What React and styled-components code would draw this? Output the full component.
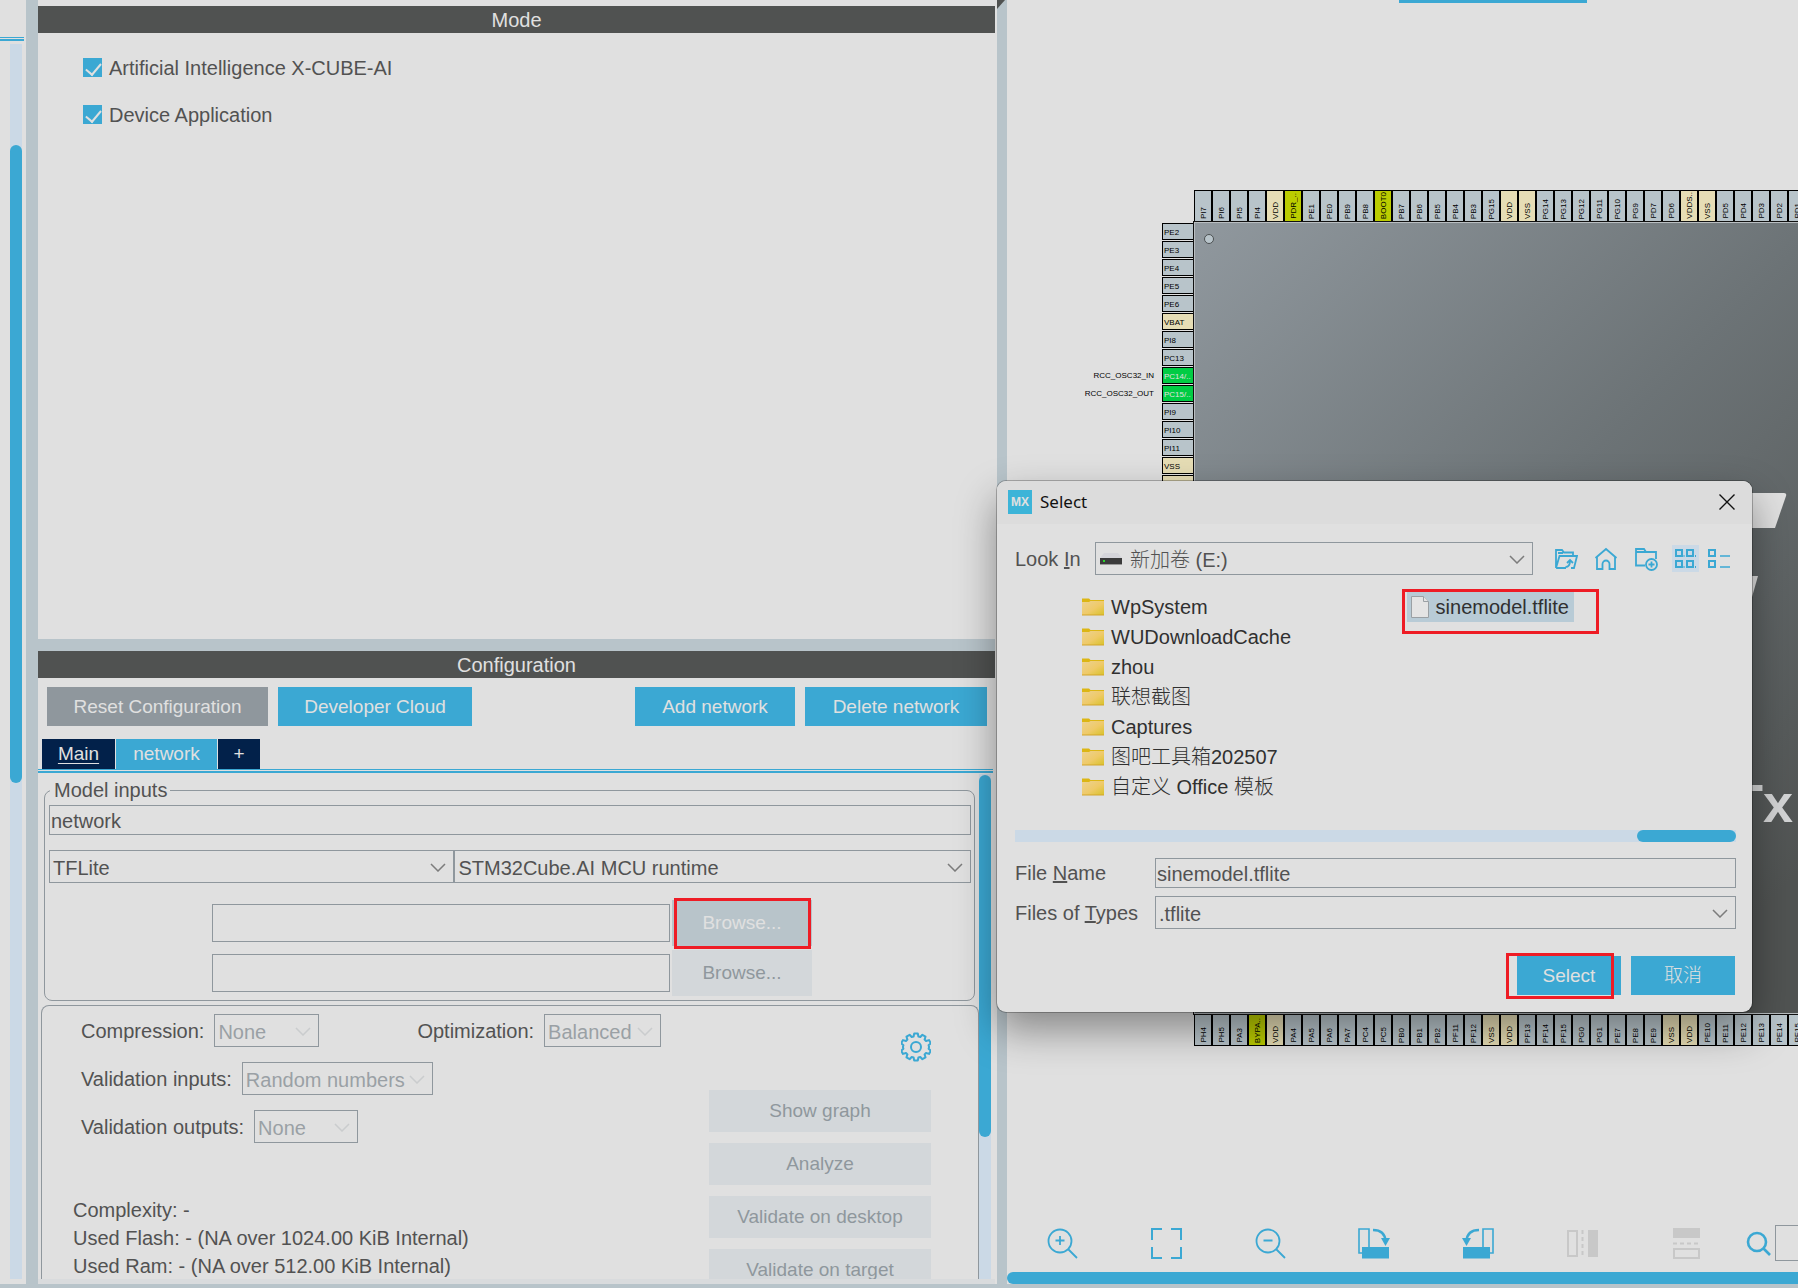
import React, { useState } from 'react';
import styled, { createGlobalStyle, css } from 'styled-components';

const colors = {
  face: '#e0e0e0',
  edge: '#d9dbdd',
  divider: '#b8c4ca',
  header: '#505251',
  blue: '#3ba8d3',
  navy: '#02214a',
  track: '#cbd9e6',
  line: '#8f979d',
  text: '#525252',
  red: '#ee1c25',
  power: '#e6ddb5',
  boot: '#bbcc00',
  active: '#00cc44'
};

const TOP_PINS =
  'PI7 PI6 PI5 PI4 VDD PDR_.. PE1 PE0 PB9 PB8 BOOT0 PB7 PB6 PB5 PB4 PB3 PG15 VDD VSS PG14 PG13 PG12 PG11 PG10 PG9 PD7 PD6 VDDS.. VSS PD5 PD4 PD3 PD2 PD1'.split(
    ' '
  );

const BOTTOM_PINS =
  'PH4 PH5 PA3 BYPA.. VDD PA4 PA5 PA6 PA7 PC4 PC5 PB0 PB1 PB2 PF11 PF12 VSS VDD PF13 PF14 PF15 PG0 PG1 PE7 PE8 PE9 VSS VDD PE10 PE11 PE12 PE13 PE14 PE15'.split(
    ' '
  );

const LEFT_PINS = [
  { name: 'PE2' },
  { name: 'PE3' },
  { name: 'PE4' },
  { name: 'PE5' },
  { name: 'PE6' },
  { name: 'VBAT' },
  { name: 'PI8' },
  { name: 'PC13' },
  { name: 'PC14/..', signal: 'RCC_OSC32_IN' },
  { name: 'PC15/..', signal: 'RCC_OSC32_OUT' },
  { name: 'PI9' },
  { name: 'PI10' },
  { name: 'PI11' },
  { name: 'VSS' },
  { name: 'VDD' }
];

const FOLDERS = [
  'WpSystem',
  'WUDownloadCache',
  'zhou',
  '联想截图',
  'Captures',
  '图吧工具箱202507',
  '自定义 Office 模板'
];

const pinColor = (name, signal) => {
  if (signal) return colors.active;
  if (/^V/.test(name)) return colors.power;
  if (/^(PDR|BOOT|BYPA)/.test(name)) return colors.boot;
  return colors.divider;
};

/* icons */

const Chevron = () => (
  <svg width="16" height="9" viewBox="0 0 16 9" fill="none" stroke="currentColor" strokeWidth="1.5">
    <path d="M1 1 L8 8 L15 1" />
  </svg>
);

const GearIcon = () => (
  <svg width="30" height="30" viewBox="0 0 30 30" fill="none" stroke={colors.blue} strokeWidth="2">
    <path
      strokeLinejoin="round"
      d="M13.2 1.500h3.600l.6 3 1.900.5 2.100-2.200 3.100 1.800-.9 3 1.400 1.400 3-.9 1.800 3.100-2.200 2.100.5 1.700-.5 1.700 2.200 2.100-1.800 3.100-3-.9-1.400 1.400.9 3-3.100 1.800-2.100-2.200-1.900.5-.6 3h-3.600l-.6-3-1.900-.5-2.100 2.200-3.100-1.800.9-3-1.400-1.400-3 .9-1.800-3.100 2.200-2.100-.5-1.700.5-1.700-2.200-2.100 1.800-3.100 3 .9 1.400-1.400-.9-3 3.100-1.800 2.100 2.200 1.900-.5z"
    />
    <circle cx="15" cy="15" r="5" />
  </svg>
);

const FolderIcon = () => (
  <svg width="22" height="18" viewBox="0 0 22 18">
    <defs>
      <linearGradient id="folder" x1="0" y1="0" x2="1" y2="1">
        <stop offset="0" stopColor="#ecd292" />
        <stop offset="0.55" stopColor="#efca68" />
        <stop offset="1" stopColor="#d8c22a" />
      </linearGradient>
    </defs>
    <path d="M0 0.5h7l1.5 1.5h13.500v4H0z" fill="#dcb614" />
    <path d="M0 4h7l1.500-1h13.500v14H0z" fill="url(#folder)" />
    <path d="M0 17h22" stroke="#d3a52c" />
  </svg>
);

const FileIcon = () => (
  <svg width="18" height="22" viewBox="0 0 18 22" fill="#e4e4e4" stroke="#9aa0a4">
    <path d="M.5.500h12l5 5v16H.5z" />
    <path d="M12.500.500v5h5" />
  </svg>
);

const DriveIcon = () => (
  <svg width="22" height="13" viewBox="0 0 22 13">
    <path d="M4 0h14l4 5H0z" fill="#d5d5da" />
    <path d="M0 5h22v7H0z" fill="#3b3b3b" />
    <path d="M0 11.500h22" stroke="#999" />
    <path d="M3 7h2v2H3z" fill="#2bd52b" />
  </svg>
);

const CloseIcon = () => (
  <svg width="16" height="16" viewBox="0 0 16 16" stroke="#111" strokeWidth="1.4">
    <path d="M.5.500l15 15M15.500.500l-15 15" />
  </svg>
);

const FolderUpIcon = () => (
  <svg width="24" height="22" viewBox="0 0 24 22" fill="none" stroke={colors.blue} strokeWidth="1.8">
    <path d="M2 20V2h6l2 2.500h9V8M2 20L5.500 8H23l-3 12h-3M2 20h10M4 5h5" />
    <path d="M11.500 19c3 0 4.500-2 4.500-6M13 15l3-3 3 3" />
  </svg>
);

const HomeIcon = () => (
  <svg width="24" height="24" viewBox="0 0 24 24" fill="none" stroke={colors.blue} strokeWidth="1.8">
    <path d="M1.500 11L12 2l10.500 9M3 10v12h5.500v-5a3.500 3.500 0 0 1 7 0v5H21V10" />
  </svg>
);

const NewFolderIcon = () => (
  <svg width="24" height="24" viewBox="0 0 24 24" fill="none" stroke={colors.blue} strokeWidth="1.8">
    <path d="M11 18.500H2V2h8l2 3h10v7M2 5h10" />
    <circle cx="17.500" cy="17.500" r="5.500" />
    <path d="M17.500 14.500v6M14.500 17.500h6" />
  </svg>
);

const GridIcon = () => (
  <svg width="23" height="21" viewBox="0 0 23 21" fill="none" stroke={colors.blue} strokeWidth="2">
    <path d="M2 2h6v6H2zM13 2h6v6h-6zM2 13h6v6H2zM13 13h6v6h-6z" />
    <path d="M10 7v2M21.500 7v2M10 18v2M21.500 18v2" strokeWidth="1" />
  </svg>
);

const ListIcon = () => (
  <svg width="23" height="21" viewBox="0 0 23 21" fill="none" stroke={colors.blue} strokeWidth="2">
    <path d="M2 2h6v6H2zM2 13h6v6H2z" />
    <path d="M13 8h10M13 19h10" strokeWidth="1.600" />
  </svg>
);

const ZoomIcon = ({ plus }) => (
  <svg width="31" height="31" viewBox="0 0 31 31" fill="none" stroke={colors.blue} strokeWidth="1.800">
    <circle cx="13" cy="13" r="11.500" />
    <path d="M21 21l9 9M8.500 12.500h9" />
    {plus && <path d="M13 8v9" />}
  </svg>
);

const FitIcon = () => (
  <svg width="31" height="31" viewBox="0 0 31 31" fill="none" stroke={colors.blue} strokeWidth="2">
    <path d="M1 12V1h10M20 1h10v11M30 19v11H20M11 30H1V19" />
  </svg>
);

const RotateIcon = ({ left }) => (
  <svg width="32" height="31" viewBox="0 0 32 31" fill="none" stroke={colors.blue} strokeWidth="1.600">
    <g transform={left ? 'matrix(-1 0 0 1 32 0)' : undefined}>
      <path d="M4 25H1V1h10v18" />
      <path d="M4 19h27v11.500H4z" fill={colors.blue} stroke="none" />
      <path d="M15 2c8 0 12 4 12.500 11" strokeWidth="2.400" />
      <path d="M23 10h9l-4.500 8z" fill={colors.blue} stroke="none" />
    </g>
  </svg>
);

const FlipIcon = ({ vertical }) => (
  <svg width="31" height="31" viewBox="0 0 31 31" fill="none" stroke="#c8c8c8" strokeWidth="2">
    <g transform={vertical ? 'matrix(0 -1 1 0 0 31)' : undefined}>
      <path d="M1 3h9v25H1z" />
      <path d="M15.500 2v28" strokeDasharray="4 3" />
      <path d="M21 2h10v27H21z" fill="#c8c8c8" stroke="none" />
    </g>
  </svg>
);

const SearchIcon = () => (
  <svg width="25" height="25" viewBox="0 0 25 25" fill="none" stroke={colors.blue} strokeWidth="2.600">
    <circle cx="11" cy="11" r="9" />
    <path d="M17.500 17.500l6.500 6.500" />
  </svg>
);

/* shared controls */

function Dropdown({ id, value, label, width, icon, disabled }) {
  return (
    <SelectBox $width={width} $disabled={disabled}>
      {icon && <SelectIcon>{icon}</SelectIcon>}
      <Select id={id} aria-label={label} disabled={disabled} $hasIcon={!!icon}>
        <option>{value}</option>
      </Select>
      <SelectArrow>
        <Chevron />
      </SelectArrow>
    </SelectBox>
  );
}

function Option({ id, label, value, width }) {
  return (
    <Field>
      <label htmlFor={id}>{label}</label>
      <Dropdown id={id} value={value} width={width} disabled />
    </Field>
  );
}

function PinRow({ names }) {
  return (
    <Pins>
      {names.map((name, index) => (
        <VerticalPin key={index} $color={pinColor(name)}>
          <PinText>{name}</PinText>
        </VerticalPin>
      ))}
    </Pins>
  );
}

function ModePanel() {
  return (
    <Mode>
      <PanelHeader>Mode</PanelHeader>
      <CheckList>
        <CheckLabel>
          <CheckBox type="checkbox" defaultChecked />
          Artificial Intelligence X-CUBE-AI
        </CheckLabel>
        <CheckLabel>
          <CheckBox type="checkbox" defaultChecked />
          Device Application
        </CheckLabel>
      </CheckList>
    </Mode>
  );
}

function ConfigurationPanel() {
  const [network, setNetwork] = useState('network');

  return (
    <Configuration>
      <PanelHeader>Configuration</PanelHeader>
      <ButtonBar>
        <Button $width={221} $color={colors.line}>
          Reset Configuration
        </Button>
        <Button $width={194}>Developer Cloud</Button>
        <Spacer />
        <Button $width={160}>Add network</Button>
        <Button $width={182}>Delete network</Button>
      </ButtonBar>
      <Tabs>
        <Tab $width={73} $current>
          Main
        </Tab>
        <Tab $width={101} $light>
          network
        </Tab>
        <Tab $width={42}>+</Tab>
      </Tabs>
      <TabRule />
      <ScrollPane>
        <ScrollContent>
          <Group>
            <legend>Model inputs</legend>
            <TextInput
              aria-label="Model name"
              value={network}
              onChange={e => setNetwork(e.target.value)}
            />
            <SelectRow>
              <Dropdown label="Model type" value="TFLite" />
              <Dropdown label="Runtime" value="STM32Cube.AI MCU runtime" />
            </SelectRow>
            <BrowseList>
              <BrowseRow>
                <TextInput $tall aria-label="Model file" />
                <Anchor>
                  <BrowseButton $hover>Browse...</BrowseButton>
                  <Highlight $inset="-2px 1px -3px 2px" />
                </Anchor>
              </BrowseRow>
              <BrowseRow>
                <TextInput $tall aria-label="Second model file" />
                <BrowseButton disabled>Browse...</BrowseButton>
              </BrowseRow>
            </BrowseList>
          </Group>
          <Settings>
            <div>
              <Options>
                <OptionRow>
                  <Option id="compression" label="Compression:" value="None" width={105} />
                  <Option id="optimization" label="Optimization:" value="Balanced" width={117} />
                </OptionRow>
                <Option
                  id="validation-inputs"
                  label="Validation inputs:"
                  value="Random numbers"
                  width={191}
                />
                <Option
                  id="validation-outputs"
                  label="Validation outputs:"
                  value="None"
                  width={104}
                />
              </Options>
              <Report>
                <div>Complexity: -</div>
                <div>Used Flash: - (NA over 1024.00 KiB Internal)</div>
                <div>Used Ram: - (NA over 512.00 KiB Internal)</div>
              </Report>
            </div>
            <Actions>
              <IconButton aria-label="Settings">
                <GearIcon />
              </IconButton>
              <ActionButton disabled>Show graph</ActionButton>
              <ActionButton disabled>Analyze</ActionButton>
              <ActionButton disabled>Validate on desktop</ActionButton>
              <ActionButton disabled>Validate on target</ActionButton>
            </Actions>
          </Settings>
        </ScrollContent>
        <Track>
          <Thumb $top={1} $size={362} />
        </Track>
      </ScrollPane>
    </Configuration>
  );
}

function Pinout() {
  return (
    <Canvas>
      <ViewTab />
      <Chip>
        <PinRow names={TOP_PINS} />
        <LeftPins>
          {LEFT_PINS.map(({ name, signal }) => (
            <LeftPinRow key={name}>
              {signal}
              <LeftPin $color={pinColor(name, signal)} $active={!!signal}>
                {name}
              </LeftPin>
            </LeftPinRow>
          ))}
        </LeftPins>
        <Package>
          <PinOne />
          <Logo width="40" height="110" viewBox="0 0 40 110" fill="#e0e0e0">
            <path d="M0 0h36q3 0 2 3L27 35H0z" />
            <path d="M0 83h10L4 104H0z" />
          </Logo>
          <PartName>Tx</PartName>
        </Package>
        <PinRow names={BOTTOM_PINS} />
      </Chip>
      <Spacer />
      <Toolbar>
        <Tool aria-label="Zoom in">
          <ZoomIcon plus />
        </Tool>
        <Tool aria-label="Best fit">
          <FitIcon />
        </Tool>
        <Tool aria-label="Zoom out">
          <ZoomIcon />
        </Tool>
        <Tool aria-label="Rotate right">
          <RotateIcon />
        </Tool>
        <Tool aria-label="Rotate left">
          <RotateIcon left />
        </Tool>
        <Tool aria-label="Flip horizontally" disabled>
          <FlipIcon />
        </Tool>
        <Tool aria-label="Flip vertically" disabled>
          <FlipIcon vertical />
        </Tool>
        <SearchLabel htmlFor="pin-search" aria-label="Search pin">
          <SearchIcon />
        </SearchLabel>
        <SearchInput id="pin-search" />
      </Toolbar>
      <CanvasScroll />
    </Canvas>
  );
}

function SelectDialog() {
  const [fileName, setFileName] = useState('sinemodel.tflite');

  return (
    <Dialog role="dialog" aria-labelledby="dialog-title">
      <TitleBar>
        <AppIcon>MX</AppIcon>
        <Title id="dialog-title">Select</Title>
        <IconButton aria-label="Close">
          <CloseIcon />
        </IconButton>
      </TitleBar>
      <DialogBody>
        <LookIn>
          <LookLabel htmlFor="look-in">
            Look <u>I</u>n
          </LookLabel>
          <Dropdown id="look-in" value="新加卷 (E:)" icon={<DriveIcon />} />
          <DialogTools>
            <ToolButton aria-label="Up one level">
              <FolderUpIcon />
            </ToolButton>
            <ToolButton aria-label="Home">
              <HomeIcon />
            </ToolButton>
            <ToolButton aria-label="New folder">
              <NewFolderIcon />
            </ToolButton>
            <ViewButtons>
              <ToolButton aria-label="List" $on>
                <GridIcon />
              </ToolButton>
              <ToolButton aria-label="Details">
                <ListIcon />
              </ToolButton>
            </ViewButtons>
          </DialogTools>
        </LookIn>
        <Files>
          <div>
            {FOLDERS.map(name => (
              <Entry key={name}>
                <FolderIcon />
                {name}
              </Entry>
            ))}
          </div>
          <Anchor>
            <Entry $selected>
              <FileIcon />
              sinemodel.tflite
            </Entry>
            <Highlight $inset="-3px -25px -12px -5px" />
          </Anchor>
        </Files>
        <HTrack>
          <HThumb />
        </HTrack>
        <Form>
          <label htmlFor="file-name">
            File <u>N</u>ame
          </label>
          <TextInput
            id="file-name"
            value={fileName}
            onChange={e => setFileName(e.target.value)}
          />
          <label htmlFor="file-type">
            Files of <u>T</u>ypes
          </label>
          <Dropdown id="file-type" value=".tflite" />
        </Form>
        <DialogButtons>
          <Anchor>
            <Button $width={104}>Select</Button>
            <Highlight $inset="-3px 7px -4px -11px" />
          </Anchor>
          <Button $width={104}>取消</Button>
        </DialogButtons>
      </DialogBody>
    </Dialog>
  );
}

function App() {
  return (
    <>
      <GlobalStyle />
      <Window>
        <Categories>
          <TabRule />
          <Track>
            <Thumb $top={101} $size={638} />
          </Track>
        </Categories>
        <Divider />
        <Column>
          <ModePanel />
          <Divider />
          <ConfigurationPanel />
        </Column>
        <Splitter>
          <svg width="9" height="9" viewBox="0 0 9 9">
            <path d="M0 0h8L0 9z" fill={colors.header} />
          </svg>
        </Splitter>
        <Pinout />
        <SelectDialog />
      </Window>
    </>
  );
}

const GlobalStyle = createGlobalStyle`
  * {
    box-sizing: border-box;
  }

  body {
    margin: 0;
    background: ${colors.face};
    color: ${colors.text};
    font: 300 20px/22px 'Liberation Sans', 'Noto Sans CJK SC', sans-serif;
  }

  button, input, select {
    margin: 0;
    padding: 0;
    border: 0;
    border-radius: 0;
    background: none;
    color: inherit;
    font: inherit;
  }

  svg {
    display: block;
    flex: none;
  }
`;

const Window = styled.div`
  position: relative;
  display: grid;
  grid-template-columns: 26px 12px minmax(0, 957fr) 12px minmax(0, 791fr);
  height: 100vh;
  overflow: hidden;
  border-bottom: 4px solid ${colors.divider};
`;

const Categories = styled.div`
  display: flex;
  flex-direction: column;
  align-items: flex-end;
  min-height: 0;
  padding: 37px 4px 5px 0;
`;

const Divider = styled.div`
  flex: none;
  min-height: 12px;
  background: ${colors.divider};
`;

const Splitter = styled.div`
  border-left: 2px solid ${colors.face};
  background: ${colors.divider};
`;

const Column = styled.div`
  display: flex;
  flex-direction: column;
  min-height: 0;
`;

const Spacer = styled.div`
  flex: 1;
`;

const Mode = styled.section`
  flex: 1 1 0;
  min-height: 0;
  padding-top: 6px;
`;

const Configuration = styled.section`
  display: flex;
  flex: 1 1 0;
  flex-direction: column;
  min-height: 0;
`;

const PanelHeader = styled.h2`
  flex: none;
  height: 27px;
  margin: 0;
  background: ${colors.header};
  color: ${colors.face};
  font-size: 20px;
  font-weight: 400;
  line-height: 28px;
  text-align: center;
`;

const CheckList = styled.div`
  display: flex;
  flex-direction: column;
  align-items: flex-start;
  gap: 25px;
  padding: 24px 45px;
`;

const CheckLabel = styled.label`
  display: flex;
  align-items: center;
  gap: 7px;
`;

const CheckBox = styled.input`
  position: relative;
  width: 19px;
  height: 20px;
  appearance: none;
  border-bottom: 1px solid ${colors.face};
  background: ${colors.blue};

  &:checked::after {
    content: '';
    position: absolute;
    top: 2px;
    left: 6px;
    width: 7px;
    height: 13px;
    border: solid ${colors.face};
    border-width: 0 2px 2px 0;
    transform: rotate(40deg);
  }
`;

const ButtonBar = styled.div`
  display: flex;
  gap: 10px;
  padding: 9px 8px 13px 9px;
`;

const Button = styled.button`
  flex: none;
  width: ${props => props.$width}px;
  height: 39px;
  background: ${props => props.$color || colors.blue};
  color: ${colors.face};
  font-size: 19px;
`;

const Tabs = styled.div`
  display: flex;
  flex: none;
  gap: 1px;
  padding-left: 4px;
`;

const Tab = styled.button`
  width: ${props => props.$width}px;
  height: 30px;
  background: ${props => (props.$light ? colors.blue : colors.navy)};
  color: ${colors.face};
  font-size: 19px;
  text-decoration: ${props => (props.$current ? 'underline' : 'none')};
  text-underline-offset: 3px;
`;

const TabRule = styled.div`
  flex: none;
  align-self: stretch;
  height: 4px;
  margin: 0 2px 1px 0;
  border-top: 1px solid ${colors.blue};
  border-bottom: 2px solid ${colors.blue};

  ${Categories} & {
    margin: 0 -2px 3px 0;
  }
`;

const ScrollPane = styled.div`
  display: flex;
  flex: 1;
  min-height: 0;
  padding-right: 4px;
  border-bottom: 5px solid ${colors.edge};
`;

const ScrollContent = styled.div`
  display: flex;
  flex: 1;
  flex-direction: column;
  min-width: 0;
  padding-top: 5px;
  overflow: hidden;
`;

const Track = styled.div`
  flex: none;
  width: 12px;
  background: ${colors.track};

  ${Categories} & {
    flex: 1;
  }
`;

const Thumb = styled.div`
  height: ${props => props.$size}px;
  border-radius: 6px;
  background: ${colors.blue};
  transform: translateY(${props => props.$top}px);
`;

const Group = styled.fieldset`
  flex: none;
  min-width: 0;
  margin: 0 4px 0 6px;
  padding: 4px 3px 4px 4px;
  border: 1px solid ${colors.line};
  border-radius: 8px;

  legend {
    margin-left: 1px;
    padding: 0 3px 0 4px;
  }
`;

const TextInput = styled.input`
  display: block;
  width: 100%;
  min-width: 0;
  height: ${props => (props.$tall ? 38 : 30)}px;
  padding: 2px 1px 0;
  border: 1px solid ${colors.line};
`;

const SelectRow = styled.div`
  display: grid;
  grid-template-columns: 405fr 516fr;
  margin: 15px 0 17px;
`;

const SelectBox = styled.div`
  position: relative;
  width: ${props => (props.$width ? `${props.$width}px` : '100%')};
  color: ${props => (props.$disabled ? '#9aa0a5' : colors.text)};
`;

const Select = styled.select`
  display: block;
  width: 100%;
  height: 33px;
  padding: 2px 20px 0 ${props => (props.$hasIcon ? 34 : 3)}px;
  appearance: none;
  border: 1px solid ${colors.line};
  opacity: 1;
`;

const SelectIcon = styled.span`
  position: absolute;
  top: 11px;
  left: 5px;
`;

const SelectArrow = styled.span`
  position: absolute;
  top: 13px;
  right: 8px;
  opacity: 0.7;
  pointer-events: none;

  ${Select}:disabled + & {
    opacity: 0.3;
  }
`;

const BrowseList = styled.div`
  display: grid;
  gap: 4px;
  padding: 0 159px 0 163px;
`;

const BrowseRow = styled.div`
  display: flex;
  align-items: center;
  gap: 2px;
`;

const Anchor = styled.div`
  position: relative;
  flex: none;
  align-self: flex-start;
`;

const Highlight = styled.span`
  position: absolute;
  inset: ${props => props.$inset};
  border: 3px solid ${colors.red};
  pointer-events: none;
`;

const disabledButton = css`
  background: #d3d7da;
  color: ${colors.line};
  font-size: 19px;
`;

const BrowseButton = styled.button`
  ${disabledButton}
  display: block;
  flex: none;
  width: 140px;
  height: 46px;

  ${props =>
    props.$hover &&
    css`
      background: ${colors.divider};
      color: ${colors.face};
    `}
`;

const Settings = styled.div`
  display: flex;
  flex: 1;
  justify-content: space-between;
  min-height: 0;
  margin: 4px 0 0 3px;
  padding: 8px 47px 0 31px;
  overflow: hidden;
  border: 1px solid ${colors.line};
  border-bottom: 0;
  border-radius: 8px 8px 0 0;
`;

const Options = styled.div`
  display: grid;
  gap: 15px;
  padding-left: 8px;
`;

const OptionRow = styled.div`
  display: flex;
  gap: 98px;
`;

const Field = styled.div`
  display: flex;
  align-items: center;
  gap: 10px;
  white-space: nowrap;
`;

const Report = styled.div`
  margin-top: 53px;
  line-height: 28px;
  white-space: nowrap;
`;

const Actions = styled.div`
  display: flex;
  flex: none;
  flex-direction: column;
  align-items: flex-end;
  gap: 11px;
  width: 222px;
  padding-top: 18px;

  > :first-child {
    margin-bottom: 17px;
  }
`;

const IconButton = styled.button`
  flex: none;
`;

const ActionButton = styled.button`
  ${disabledButton}
  flex: none;
  width: 100%;
  height: 42px;
`;

const Canvas = styled.section`
  display: flex;
  flex-direction: column;
  min-height: 0;
  overflow: hidden;
`;

const ViewTab = styled.div`
  flex: none;
  width: 188px;
  height: 3px;
  margin-left: 392px;
  background: ${colors.blue};
`;

const Chip = styled.div`
  display: grid;
  flex: none;
  grid-template-columns: 187px minmax(0, 1fr);
  grid-template-rows: 32px 792px 32px;
  margin-top: 187px;
  color: #000;
  font-size: 8px;
  line-height: 10px;
`;

const Pins = styled.div`
  display: flex;
  grid-column: 2;
  overflow: hidden;
`;

const VerticalPin = styled.div`
  display: flex;
  flex: none;
  align-items: flex-end;
  justify-content: center;
  width: 18px;
  padding: 0 0 2px 2px;
  border: 1px solid #000;
  background: ${props => props.$color};
`;

const PinText = styled.span`
  writing-mode: vertical-rl;
  transform: rotate(180deg);
`;

const LeftPins = styled.div`
  display: flex;
  flex-direction: column;
  gap: 1px;
  padding-top: 1px;
`;

const LeftPinRow = styled.div`
  display: flex;
  align-items: center;
  justify-content: flex-end;
  gap: 8px;
  height: 17px;
`;

const LeftPin = styled.div`
  flex: none;
  width: 32px;
  height: 17px;
  padding: 4px 0 0 1px;
  overflow: hidden;
  border: 1px solid #000;
  background: ${props => props.$color};
  color: ${props => (props.$active ? colors.face : '#000')};
`;

const Package = styled.div`
  position: relative;
  overflow: hidden;
  border: solid #b9bec1;
  border-width: 1px 0 1px 1px;
  outline: 1px solid #111;
  background: linear-gradient(135deg, #90989e, #6c7376 45%, #505352 90%);
`;

const PinOne = styled.div`
  width: 10px;
  height: 10px;
  margin: 11px 0 0 9px;
  border: 1px solid #4c5052;
  border-radius: 50%;
  background: ${colors.divider};
`;

const Logo = styled.svg`
  position: absolute;
  top: 270px;
  right: 10px;
`;

const PartName = styled.div`
  position: absolute;
  top: 550px;
  right: 5px;
  color: #d4d5d6;
  font-size: 54px;
  font-weight: 700;
  line-height: 60px;
`;

const Toolbar = styled.div`
  display: flex;
  flex: none;
  align-items: center;
  height: 36px;
  margin-bottom: 11px;
  padding-left: 3px;
`;

const Tool = styled.button`
  display: flex;
  flex: none;
  justify-content: center;
  width: 104px;
`;

const SearchLabel = styled.label`
  margin: 0 4px 0 8px;
`;

const SearchInput = styled.input`
  flex: none;
  width: 160px;
  height: 36px;
  border: 1px solid ${colors.line};
`;

const CanvasScroll = styled.div`
  flex: none;
  height: 12px;
  border-radius: 6px 0 0 6px;
  background: ${colors.blue};
`;

const Dialog = styled.div`
  position: absolute;
  top: 481px;
  right: 46px;
  width: 755px;
  overflow: hidden;
  border-radius: 9px;
  background: ${colors.face};
  box-shadow: 0 0 0 1px rgba(0, 0, 0, 0.25), 0 18px 40px rgba(0, 0, 0, 0.4);
`;

const TitleBar = styled.div`
  display: flex;
  align-items: center;
  height: 43px;
  padding: 0 17px 2px 11px;
  background: #dcdcdc;
`;

const AppIcon = styled.span`
  width: 24px;
  height: 24px;
  background: #3cb4d8;
  color: ${colors.face};
  font-size: 12px;
  font-weight: 700;
  line-height: 24px;
  text-align: center;
`;

const Title = styled.span`
  flex: 1;
  padding-left: 8px;
  color: #111;
  font-family: 'Noto Sans', sans-serif;
  font-size: 17px;
  font-weight: 400;
`;

const DialogBody = styled.div`
  padding: 18px 16px 17px 18px;
`;

const LookIn = styled.div`
  display: flex;
  align-items: center;
`;

const LookLabel = styled.label`
  flex: none;
  width: 80px;
`;

const DialogTools = styled.div`
  display: flex;
  flex: none;
  align-items: center;
  gap: 13px;
  padding: 0 4px 0 19px;
`;

const ViewButtons = styled.div`
  display: flex;
  gap: 6px;
`;

const ToolButton = styled.button`
  display: grid;
  width: 27px;
  height: 27px;
  place-items: center;
  background: ${props => (props.$on ? colors.track : 'none')};
`;

const Files = styled.div`
  display: flex;
  justify-content: space-between;
  height: 238px;
  padding: 0 162px 0 67px;
  margin-top: 17px;
`;

const Entry = styled.div`
  display: flex;
  align-items: center;
  gap: 7px;
  height: 30px;
  padding: ${props => (props.$selected ? '0 5px 0 4px' : 0)};
  background: ${props => (props.$selected ? '#b8cbd6' : 'none')};
  color: #303030;
`;

const HTrack = styled.div`
  display: flex;
  justify-content: flex-end;
  background: ${colors.track};
`;

const HThumb = styled.div`
  width: 99px;
  height: 12px;
  border-radius: 6px;
  background: ${colors.blue};
`;

const Form = styled.div`
  display: grid;
  grid-template-columns: 140px 1fr;
  align-items: center;
  row-gap: 8px;
  margin: 16px 0 27px;
`;

const DialogButtons = styled.div`
  display: flex;
  justify-content: flex-end;
  gap: 10px;
  padding-right: 1px;
`;

export default App;
